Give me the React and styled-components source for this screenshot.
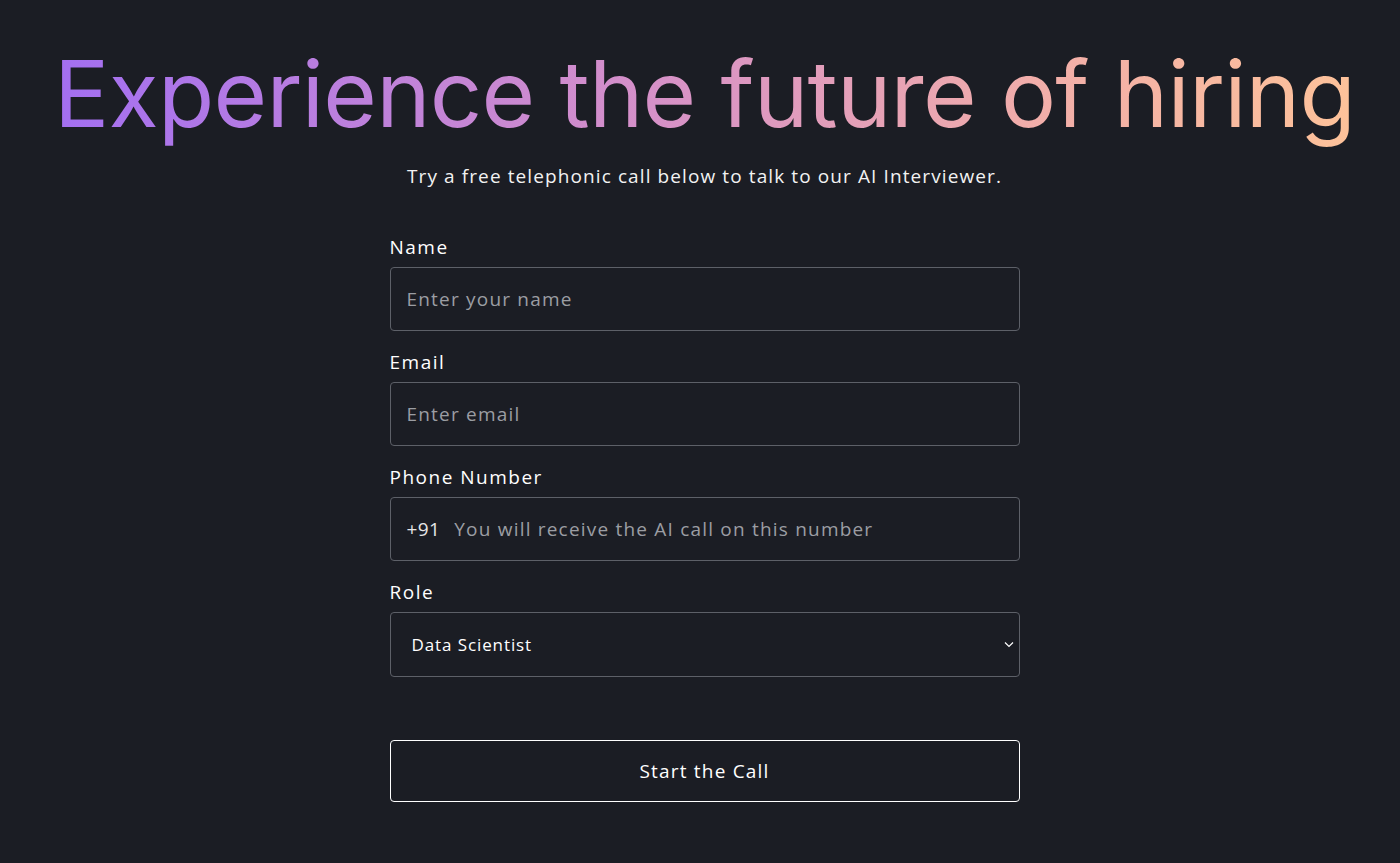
import React from "react";
import styled, { createGlobalStyle } from "styled-components";

const Global = createGlobalStyle`
  html, body {
    margin: 0;
    padding: 0;
    background: #1b1d24;
  }
  * { box-sizing: border-box; }
`;

const Page = styled.main`
  min-height: 863px;
  background: #1b1d24;
  display: flex;
  flex-direction: column;
  align-items: center;
  padding: 38px 0 0 9px;
  font-family: "Open Sans", "Noto Sans", sans-serif;
  color: #ffffff;
`;

const Title = styled.h1`
  margin: 0;
  font-family: "Inter", "DejaVu Sans", sans-serif;
  font-weight: 400;
  font-size: 92px;
  line-height: 112px;
  letter-spacing: -0.75px;
  background: linear-gradient(90deg, #a36ff1 0%, #d590c9 45%, #f1adaa 75%, #fdc29a 100%);
  -webkit-background-clip: text;
  background-clip: text;
  color: transparent;
`;

const Subtitle = styled.p`
  margin: 13px 0 0;
  font-size: 19px;
  letter-spacing: 1.1px;
  color: #f2f2f2;
`;

const Form = styled.form`
  width: 630px;
  margin-top: 47px;
  display: flex;
  flex-direction: column;
  gap: 20px;
`;

const Field = styled.div`
  display: flex;
  flex-direction: column;
  gap: 9px;
`;

const Label = styled.label`
  font-size: 19px;
  font-weight: 500;
  letter-spacing: 1.5px;
  color: #ffffff;
  line-height: 22px;
`;

const Box = styled.div`
  position: relative;
  height: ${(p) => (p.$tall ? "65px" : "64px")};
  border: 1px solid #5d6068;
  border-radius: 4px;
  display: flex;
  align-items: center;
  padding: 0 16px;
  gap: 14px;
`;

const Input = styled.input`
  flex: 1;
  background: transparent;
  border: 0;
  outline: 0;
  color: #ffffff;
  font-family: inherit;
  font-size: 19px;
  letter-spacing: 1.2px;
  padding: 0;
  &::placeholder {
    color: #9b9da3;
  }
`;

const Prefix = styled.span`
  font-size: 19px;
  letter-spacing: 0.4px;
  color: #e6e6e6;
`;

const Select = styled.select`
  appearance: none;
  flex: 1;
  height: 100%;
  background: transparent;
  border: 0;
  outline: 0;
  color: #ffffff;
  font-family: "Open Sans", sans-serif;
  font-size: 17px;
  letter-spacing: 0.9px;
  padding: 0 0 0 5px;
`;

const Chevron = styled.svg`
  position: absolute;
  right: 5px;
  top: 50%;
  margin-top: -4px;
  pointer-events: none;
`;

const Button = styled.button`
  margin-top: 43px;
  height: 62px;
  background: transparent;
  border: 1.5px solid #ffffff;
  border-radius: 4px;
  color: #ffffff;
  font-family: inherit;
  font-size: 19px;
  letter-spacing: 1.2px;
  cursor: pointer;
`;

export default function App() {
  return (
    <Page>
      <Global />
      <Title>Experience the future of hiring</Title>
      <Subtitle>Try a free telephonic call below to talk to our AI Interviewer.</Subtitle>
      <Form onSubmit={(e) => e.preventDefault()}>
        <Field>
          <Label>Name</Label>
          <Box>
            <Input placeholder="Enter your name" />
          </Box>
        </Field>
        <Field>
          <Label>Email</Label>
          <Box>
            <Input placeholder="Enter email" />
          </Box>
        </Field>
        <Field>
          <Label>Phone Number</Label>
          <Box>
            <Prefix>+91</Prefix>
            <Input placeholder="You will receive the AI call on this number" />
          </Box>
        </Field>
        <Field>
          <Label>Role</Label>
          <Box $tall>
            <Select defaultValue="Data Scientist">
              <option>Data Scientist</option>
              <option>Software Engineer</option>
              <option>Product Manager</option>
            </Select>
            <Chevron width="10" height="7" viewBox="0 0 10 7">
              <path d="M1 1.5 L5 5.5 L9 1.5" fill="none" stroke="#ffffff" strokeWidth="1.2" />
            </Chevron>
          </Box>
        </Field>
        <Button type="submit">Start the Call</Button>
      </Form>
    </Page>
  );
}
